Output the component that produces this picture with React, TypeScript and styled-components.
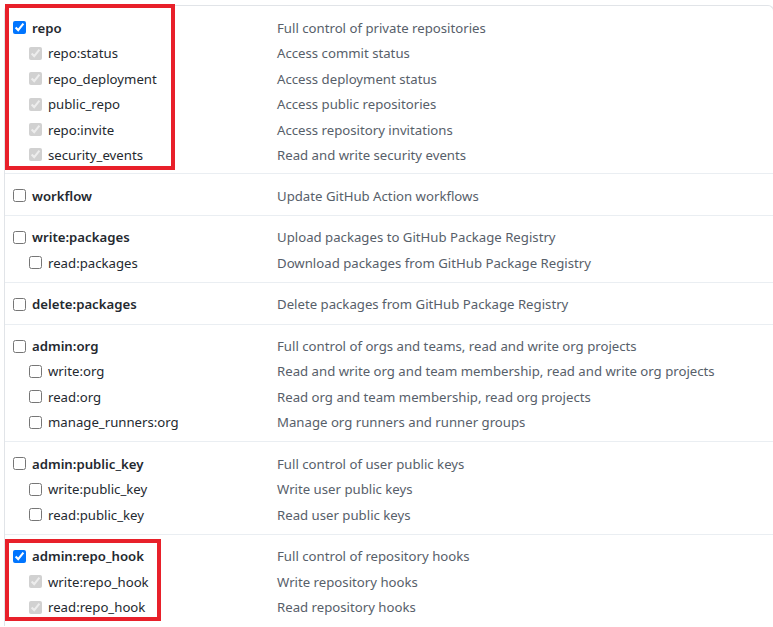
import React from 'react';
import styled, { createGlobalStyle } from 'styled-components';

type Scope = { name: string; desc: string; checked?: boolean };
type Mark = { top: number; width: number; height: number };
type Group = {
  parent: Scope;
  children?: Scope[];
  mark?: Mark;
};

const groups: Group[] = [
  {
    parent: { name: 'repo', desc: 'Full control of private repositories', checked: true },
    children: [
      { name: 'repo:status', desc: 'Access commit status' },
      { name: 'repo_deployment', desc: 'Access deployment status' },
      { name: 'public_repo', desc: 'Access public repositories' },
      { name: 'repo:invite', desc: 'Access repository invitations' },
      { name: 'security_events', desc: 'Read and write security events' },
    ],
    mark: { top: -2, width: 170, height: 166 },
  },
  { parent: { name: 'workflow', desc: 'Update GitHub Action workflows' } },
  {
    parent: { name: 'write:packages', desc: 'Upload packages to GitHub Package Registry' },
    children: [{ name: 'read:packages', desc: 'Download packages from GitHub Package Registry' }],
  },
  { parent: { name: 'delete:packages', desc: 'Delete packages from GitHub Package Registry' } },
  {
    parent: { name: 'admin:org', desc: 'Full control of orgs and teams, read and write org projects' },
    children: [
      { name: 'write:org', desc: 'Read and write org and team membership, read and write org projects' },
      { name: 'read:org', desc: 'Read org and team membership, read org projects' },
      { name: 'manage_runners:org', desc: 'Manage org runners and runner groups' },
    ],
  },
  {
    parent: { name: 'admin:public_key', desc: 'Full control of user public keys' },
    children: [
      { name: 'write:public_key', desc: 'Write user public keys' },
      { name: 'read:public_key', desc: 'Read user public keys' },
    ],
  },
  {
    parent: { name: 'admin:repo_hook', desc: 'Full control of repository hooks', checked: true },
    children: [
      { name: 'write:repo_hook', desc: 'Write repository hooks' },
      { name: 'read:repo_hook', desc: 'Read repository hooks' },
    ],
    mark: { top: 4, width: 156, height: 82 },
  },
];

const GlobalStyle = createGlobalStyle`
  html, body {
    margin: 0;
    background: #fff;
  }
  body {
    padding: 5px 0 0 4px;
    font-family: "Noto Sans", "Open Sans", sans-serif;
    font-size: 13.2px;
    color: #24292f;
    overflow: hidden;
  }
`;

const List = styled.div`
  border: 1px solid #e1e4e8;
  border-bottom: none;
  border-radius: 6px 6px 0 0;
  width: 768px;
`;

const GroupBox = styled.div`
  position: relative;
  padding: 8.7px 0 6.6px;
  border-top: 1px solid #eaeef2;
  &:first-child {
    border-top: none;
    padding: 9.3px 0 5.6px;
  }
`;

const Row = styled.label`
  display: grid;
  grid-template-columns: 272px 1fr;
  align-items: center;
  height: 25.4px;
`;

const Name = styled.span<{ $child?: boolean }>`
  display: flex;
  align-items: center;
  gap: 6px;
  padding-left: ${({ $child }) => ($child ? 24 : 8)}px;
  font-weight: ${({ $child }) => ($child ? 400 : 600)};
  color: #24292f;
  white-space: nowrap;
`;

const Box = styled.input`
  width: 13px;
  height: 13px;
  margin: 0;
  flex: none;
  accent-color: #0075ff;
`;

const Desc = styled.span`
  color: #57606a;
  white-space: nowrap;
`;

const Highlight = styled.div`
  position: absolute;
  left: 0;
  border: 4px solid #e8202a;
  box-sizing: border-box;
  pointer-events: none;
`;

function ScopeRow({ scope, child, checked }: { scope: Scope; child?: boolean; checked: boolean }) {
  return (
    <Row>
      <Name $child={child}>
        <Box type="checkbox" checked={checked} disabled={child && checked} readOnly />
        {scope.name}
      </Name>
      <Desc>{scope.desc}</Desc>
    </Row>
  );
}

export default function App() {
  return (
    <>
      <GlobalStyle />
      <List>
        {groups.map((g) => {
          const on = !!g.parent.checked;
          return (
            <GroupBox key={g.parent.name}>
              <ScopeRow scope={g.parent} checked={on} />
              {g.children?.map((c) => (
                <ScopeRow key={c.name} scope={c} child checked={on} />
              ))}
              {g.mark && (
                <Highlight style={{ top: g.mark.top, width: g.mark.width, height: g.mark.height }} />
              )}
            </GroupBox>
          );
        })}
      </List>
    </>
  );
}
